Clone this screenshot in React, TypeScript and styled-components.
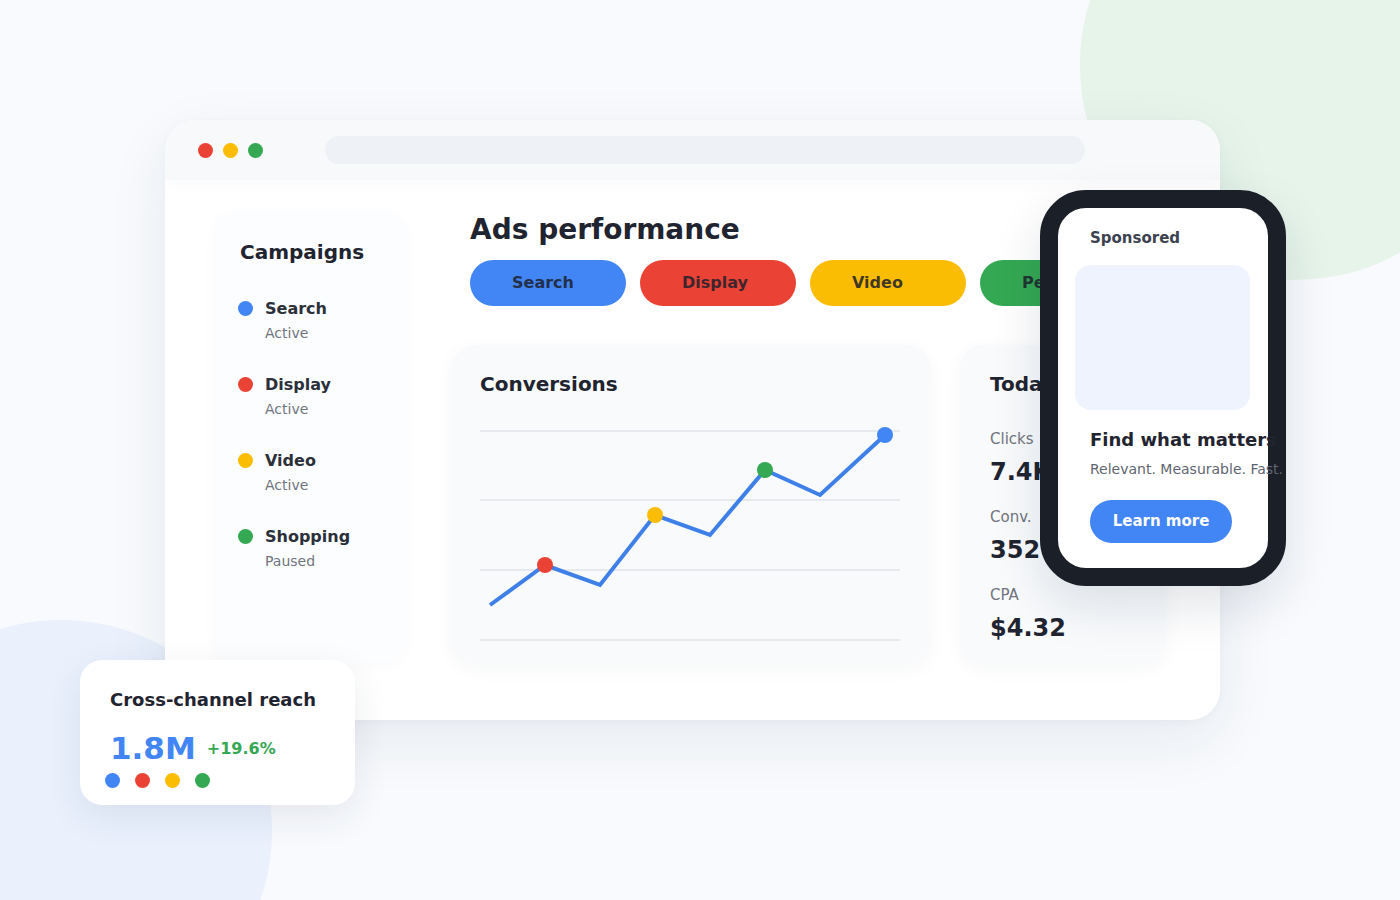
import { createGlobalStyle, styled } from 'styled-components';

const GlobalStyle = createGlobalStyle`
    html, body {
        margin: 0;
        padding: 0;
        background: #f8fafd;
    }
    * {
        box-sizing: border-box;
    }
    body {
        font-family: 'DejaVu Sans', 'Liberation Sans', sans-serif;
        color: #1f2430;
    }
`;

const BLUE = '#4285f4';
const RED = '#ea4335';
const YELLOW = '#fbbc04';
const GREEN = '#34a853';

const campaigns = [
    { name: 'Search', state: 'Active', color: BLUE },
    { name: 'Display', state: 'Active', color: RED },
    { name: 'Video', state: 'Active', color: YELLOW },
    { name: 'Shopping', state: 'Paused', color: GREEN },
];

const channels = [
    { name: 'Search', color: BLUE },
    { name: 'Display', color: RED },
    { name: 'Video', color: YELLOW },
    { name: 'Performance Max', color: GREEN },
];

const stats = [
    { label: 'Clicks', value: '7.4K' },
    { label: 'Conv.', value: '352' },
    { label: 'CPA', value: '$4.32' },
];

// chart points, in svg coords (420 x 220)
const points = [
    [10, 180],
    [65, 140],
    [120, 160],
    [175, 90],
    [230, 110],
    [285, 45],
    [340, 70],
    [405, 10],
];

const markers = [
    { i: 1, color: RED },
    { i: 3, color: YELLOW },
    { i: 5, color: GREEN },
    { i: 7, color: BLUE },
];

const ConversionsChart = () => (
    <svg width="420" height="220" viewBox="0 0 420 220">
        {[6, 75, 145, 215].map((y) => (
            <line key={y} x1="0" x2="420" y1={y} y2={y} stroke="#e6e9ee" strokeWidth="2" />
        ))}
        <polyline
            points={points.map((p) => p.join(',')).join(' ')}
            fill="none"
            stroke="#3f80e8"
            strokeWidth="4"
            strokeLinejoin="miter"
        />
        {markers.map((m) => (
            <circle key={m.i} cx={points[m.i][0]} cy={points[m.i][1]} r="8" fill={m.color} />
        ))}
    </svg>
);

const App = () => {
    return (
        <Page>
            <GlobalStyle />
            <GreenBlob />
            <BlueBlob />

            <Window>
                <TopBar>
                    <Lights>
                        <Dot $color={RED} $size={15} />
                        <Dot $color={YELLOW} $size={15} />
                        <Dot $color={GREEN} $size={15} />
                    </Lights>
                    <UrlBar />
                </TopBar>

                <WindowBody>
                    <Sidebar>
                        <SidebarTitle>Campaigns</SidebarTitle>
                        <CampaignList>
                            {campaigns.map((c) => (
                                <Campaign key={c.name}>
                                    <Dot $color={c.color} $size={15} />
                                    <CampaignText>
                                        <CampaignName>{c.name}</CampaignName>
                                        <CampaignState>{c.state}</CampaignState>
                                    </CampaignText>
                                </Campaign>
                            ))}
                        </CampaignList>
                    </Sidebar>

                    <Main>
                        <MainHeader>
                            <PageTitle>Ads performance</PageTitle>
                            <Chips>
                                {channels.map((ch) => (
                                    <Chip key={ch.name} $color={ch.color}>
                                        {ch.name}
                                    </Chip>
                                ))}
                            </Chips>
                        </MainHeader>

                        <Cards>
                            <ChartCard>
                                <CardTitle>Conversions</CardTitle>
                                <ChartWrap>
                                    <ConversionsChart />
                                </ChartWrap>
                            </ChartCard>
                            <StatsCard>
                                <CardTitle>Today</CardTitle>
                                <StatList>
                                    {stats.map((s) => (
                                        <Stat key={s.label}>
                                            <StatLabel>{s.label}</StatLabel>
                                            <StatValue>{s.value}</StatValue>
                                        </Stat>
                                    ))}
                                </StatList>
                            </StatsCard>
                        </Cards>
                    </Main>
                </WindowBody>
            </Window>

            <Phone>
                <Sponsored>Sponsored</Sponsored>
                <AdImage />
                <AdTitle>Find what matters</AdTitle>
                <AdText>Relevant. Measurable. Fast.</AdText>
                <LearnMore>Learn more</LearnMore>
            </Phone>

            <ReachCard>
                <ReachTitle>Cross-channel reach</ReachTitle>
                <ReachRow>
                    <ReachValue>1.8M</ReachValue>
                    <ReachDelta>+19.6%</ReachDelta>
                </ReachRow>
                <ReachDots>
                    <Dot $color={BLUE} $size={15} />
                    <Dot $color={RED} $size={15} />
                    <Dot $color={YELLOW} $size={15} />
                    <Dot $color={GREEN} $size={15} />
                </ReachDots>
            </ReachCard>
        </Page>
    );
};

export default App;

const Page = styled.div`
    position: relative;
    width: 1400px;
    height: 900px;
    overflow: hidden;
    background: #f8fafd;
    padding: 120px 0 0 165px;
`;

const GreenBlob = styled.div`
    position: absolute;
    left: 1080px;
    top: -150px;
    width: 430px;
    height: 430px;
    border-radius: 50%;
    background: #e6f4ea;
`;

const BlueBlob = styled.div`
    position: absolute;
    left: -150px;
    top: 620px;
    width: 422px;
    height: 422px;
    border-radius: 50%;
    background: #eaf1fd;
`;

const Window = styled.div`
    position: relative;
    width: 1055px;
    height: 600px;
    background: #ffffff;
    border-radius: 30px;
    box-shadow: 0 20px 60px rgba(30, 45, 80, 0.08), 0 2px 8px rgba(30, 45, 80, 0.03);
    overflow: hidden;
`;

const TopBar = styled.div`
    display: flex;
    align-items: center;
    height: 60px;
    padding: 0 0 0 33px;
    background: #f8f9fb;
    box-shadow: 0 6px 14px rgba(30, 45, 80, 0.02);
`;

const Lights = styled.div`
    display: flex;
    gap: 10px;
`;

const Dot = styled.span<{ $color: string; $size: number }>`
    display: block;
    flex: none;
    width: ${(p) => p.$size}px;
    height: ${(p) => p.$size}px;
    border-radius: 50%;
    background: ${(p) => p.$color};
`;

const UrlBar = styled.div`
    margin-left: 62px;
    width: 760px;
    height: 28px;
    border-radius: 14px;
    background: #eef1f6;
`;

const WindowBody = styled.div`
    display: flex;
    gap: 47px;
    padding: 32px 0 0 50px;
`;

const Sidebar = styled.div`
    width: 190px;
    height: 450px;
    padding: 28px 0 0 25px;
    border-radius: 18px;
    background: #fcfdfe;
    box-shadow: 0 4px 18px rgba(30, 45, 80, 0.025);
`;

const SidebarTitle = styled.div`
    font-size: 20px;
    line-height: 24px;
    font-weight: 700;
    color: #1f2430;
`;

const CampaignList = styled.div`
    display: flex;
    flex-direction: column;
    gap: 32px;
    margin-top: 35px;
`;

const Campaign = styled.div`
    display: flex;
    align-items: flex-start;
    gap: 12px;

    & > span {
        margin: 2px 0 0 -2px;
    }
`;

const CampaignText = styled.div`
    display: flex;
    flex-direction: column;
    gap: 4px;
`;

const CampaignName = styled.div`
    font-size: 16px;
    line-height: 20px;
    font-weight: 700;
    color: #2b303b;
`;

const CampaignState = styled.div`
    font-size: 14px;
    line-height: 20px;
    color: #70757f;
`;

const Main = styled.div`
    display: flex;
    flex-direction: column;
`;

const MainHeader = styled.div`
    padding-left: 18px;
`;

const PageTitle = styled.div`
    font-size: 28px;
    line-height: 34px;
    font-weight: 700;
    color: #1f2430;
    margin-top: 1px;
`;

const Chips = styled.div`
    display: flex;
    gap: 14px;
    margin-top: 13px;
`;

const Chip = styled.div<{ $color: string }>`
    flex: none;
    width: 156px;
    height: 46px;
    padding: 0 0 0 42px;
    border-radius: 23px;
    background: ${(p) => p.$color};
    color: rgba(28, 32, 44, 0.85);
    font-size: 16px;
    line-height: 46px;
    font-weight: 700;
    white-space: nowrap;
`;

const Cards = styled.div`
    display: flex;
    gap: 30px;
    margin-top: 39px;
`;

const CardBase = styled.div`
    height: 320px;
    padding: 27px 0 0 28px;
    border-radius: 24px;
    background: #f8fafc;
    box-shadow: 0 4px 20px rgba(30, 45, 80, 0.04);
`;

const ChartCard = styled(CardBase)`
    width: 478px;
`;

const StatsCard = styled(CardBase)`
    width: 205px;
    padding-left: 30px;
`;

const CardTitle = styled.div`
    font-size: 20px;
    line-height: 24px;
    font-weight: 700;
    color: #1f2430;
`;

const ChartWrap = styled.div`
    margin-top: 29px;
    line-height: 0;
`;

const StatList = styled.div`
    display: flex;
    flex-direction: column;
    gap: 21px;
    margin-top: 34px;
`;

const Stat = styled.div`
    display: flex;
    flex-direction: column;
    gap: 9px;
`;

const StatLabel = styled.div`
    font-size: 15px;
    line-height: 18px;
    color: #70757f;
`;

const StatValue = styled.div`
    font-size: 24px;
    line-height: 30px;
    font-weight: 700;
    color: #1f2430;
`;

const Phone = styled.div`
    position: absolute;
    left: 1040px;
    top: 190px;
    width: 246px;
    height: 396px;
    padding: 21px 32px 0 32px;
    border: 18px solid #1b1f28;
    border-radius: 46px;
    background: #ffffff;
    box-shadow: 0 20px 50px rgba(20, 30, 60, 0.12);
`;

const Sponsored = styled.div`
    font-size: 15px;
    line-height: 18px;
    font-weight: 700;
    color: #3c4250;
`;

const AdImage = styled.div`
    width: 175px;
    height: 145px;
    margin: 18px 0 0 -15px;
    border-radius: 16px;
    background: #eef3fd;
`;

const AdTitle = styled.div`
    margin-top: 19px;
    font-size: 18px;
    line-height: 22px;
    font-weight: 700;
    color: #1f2430;
    white-space: nowrap;
`;

const AdText = styled.div`
    margin-top: 9px;
    font-size: 14px;
    line-height: 18px;
    color: #5f6570;
    white-space: nowrap;
`;

const LearnMore = styled.div`
    width: 142px;
    height: 43px;
    margin-top: 22px;
    border-radius: 22px;
    background: ${BLUE};
    color: #ffffff;
    font-size: 15px;
    line-height: 43px;
    font-weight: 700;
    text-align: center;
`;

const ReachCard = styled.div`
    position: absolute;
    left: 80px;
    top: 660px;
    width: 275px;
    height: 145px;
    padding: 29px 0 0 30px;
    border-radius: 22px;
    background: #ffffff;
    box-shadow: 0 12px 36px rgba(30, 45, 80, 0.09);
`;

const ReachTitle = styled.div`
    font-size: 18px;
    line-height: 22px;
    font-weight: 700;
    color: #1f2430;
`;

const ReachRow = styled.div`
    display: flex;
    align-items: center;
    gap: 11px;
    margin-top: 18px;
`;

const ReachValue = styled.div`
    font-size: 31px;
    line-height: 38px;
    font-weight: 700;
    color: ${BLUE};
`;

const ReachDelta = styled.div`
    font-size: 16px;
    font-weight: 700;
    color: ${GREEN};
`;

const ReachDots = styled.div`
    display: flex;
    gap: 15px;
    margin: 6px 0 0 -5px;
`;
